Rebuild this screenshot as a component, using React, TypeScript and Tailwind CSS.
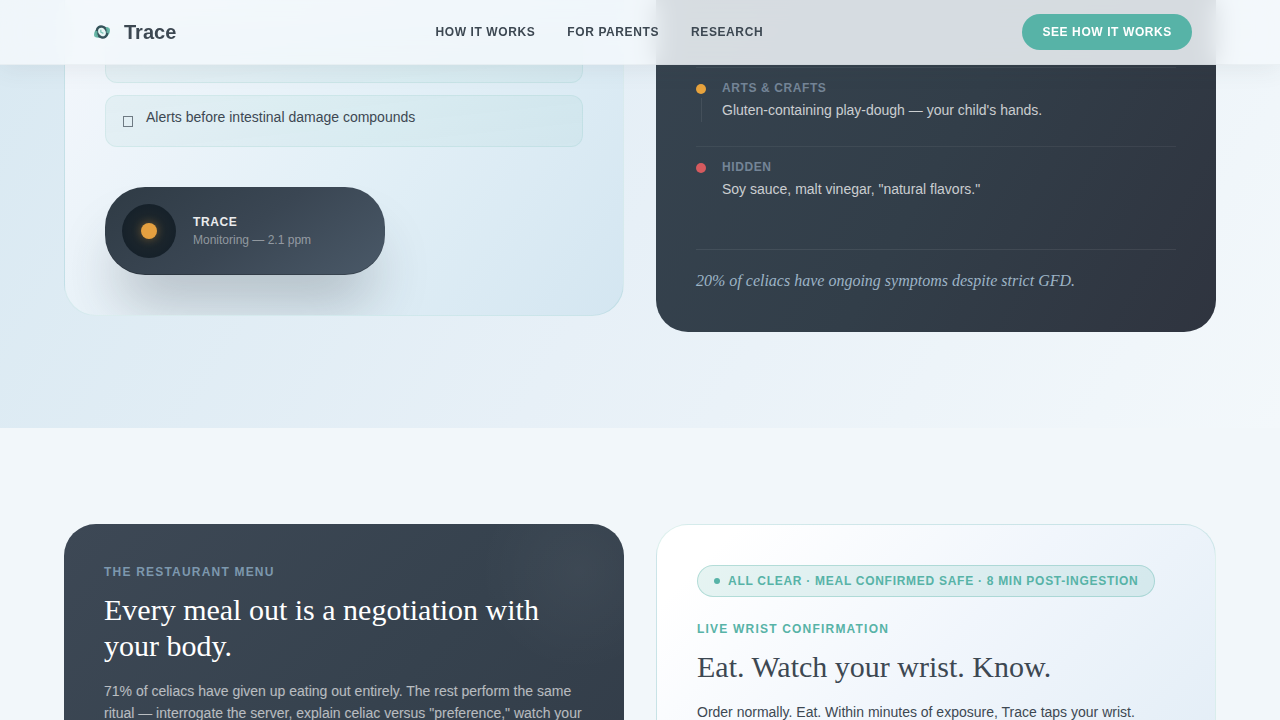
import { clsx } from "clsx";

interface Exposure {
  label: string;
  text: string;
  dot: string;
  connected: boolean;
}

const navLinks = ["How it works", "For parents", "Research"];

const exposures: Exposure[] = [
  {
    label: "Arts & crafts",
    text: "Gluten-containing play-dough — your child's hands.",
    dot: "bg-[#e8a33d]",
    connected: true,
  },
  {
    label: "Hidden",
    text: 'Soy sauce, malt vinegar, "natural flavors."',
    dot: "bg-[#d65a5e]",
    connected: false,
  },
];

function Logo() {
  return (
    <svg viewBox="0 0 28 28" className="size-7" fill="none" aria-hidden="true">
      <path d="M6 17c0-4 2.5-7 6-7.500l7-.2c2 .2 3 1.200 3 2.700 0 4-2.500 7-6 7.500l-6 .2c-2.500 0-4-1-4-2.700z" fill="#6dbbab" />
      <ellipse cx="14" cy="14" rx="4.800" ry="5.800" fill="#e6f5f4" stroke="#35535a" strokeWidth="2.400" transform="rotate(-35 14 14)" />
      <path d="M18.500 9.500a6.500 6.500 0 0 1 .8 5.500M9.500 18.500a6.500 6.500 0 0 1-.8-5.500" stroke="#5fae9f" strokeWidth="1.800" />
      <path d="M12.800 11.800v2.400l2.600 1.200" stroke="#7cc4b6" strokeWidth="1.300" />
    </svg>
  );
}

function Header() {
  return (
    <header className="fixed inset-x-0 top-0 z-50 border-b border-[#3d4852]/5 bg-[#f3f8fc]/85 shadow-[0_4px_24px_rgba(61,72,82,0.08)] will-change-transform [backdrop-filter:blur(12px)]">
      <div className="mx-16 flex h-16 items-center justify-between px-6">
        <a href="#" className="flex items-center gap-2">
          <Logo />
          <span className="text-xl font-bold text-[#3d4852]">Trace</span>
        </a>
        <nav className="flex gap-8">
          {navLinks.map((link) => (
            <a key={link} href="#" className="text-xs font-bold tracking-wider text-[#3d4852] uppercase">
              {link}
            </a>
          ))}
        </nav>
        <button className="h-9 rounded-full bg-[#57b3a7] px-5 text-xs font-bold tracking-wider text-white uppercase">
          See how it works
        </button>
      </div>
    </header>
  );
}

function Feature({ children }: { children?: string }) {
  return (
    <li className="flex h-[52px] items-start gap-3 rounded-xl border border-[#57b3a7]/12 bg-linear-to-br from-[#57b3a7]/8 to-[#57b3a7]/6 px-4 py-3">
      {children && (
        <>
          <span className="flex h-[26px] w-3 items-center justify-center">
            <span className="h-[11px] w-2.5 border border-[#3d4852]/70" />
          </span>
          <span className="-mt-px text-sm leading-5 text-[#3d4852]">{children}</span>
        </>
      )}
    </li>
  );
}

function DevicePill() {
  return (
    <div className="mt-10 flex h-[88px] w-[280px] items-center gap-4 rounded-[40px] bg-linear-[145deg] from-[#2f3b45] via-[#3a4653] to-[#4a5968] px-4 shadow-[0_40px_56px_-12px_rgba(45,55,65,0.28),inset_0_-1px_0_rgba(0,0,0,0.2)]">
      <div className="flex size-14 items-center justify-center rounded-full border border-transparent bg-[radial-gradient(circle,#222a2e_0%,#16212a_70%)] bg-clip-padding">
        <span className="size-4 rounded-full bg-[#e5a040] shadow-[0_0_10px_rgba(232,163,61,0.4)]" />
      </div>
      <div>
        <p className="text-xs leading-[18px] font-bold tracking-wider text-white/90 uppercase">Trace</p>
        <p className="text-xs leading-[18px] text-white/45">Monitoring — 2.1 ppm</p>
      </div>
    </div>
  );
}

function ExposureRow({ item, last }: { item: Exposure; last: boolean }) {
  return (
    <li className={clsx("flex gap-4 pt-3 pb-6", !last && "border-b border-white/6")}>
      <div className="flex w-2.5 flex-col items-center gap-1 pt-1">
        <span className={clsx("size-2.5 rounded-full", item.dot)} />
        <span className={clsx("h-6 w-px", item.connected && "bg-white/8")} />
      </div>
      <div>
        <h3 className="text-xs leading-4 font-bold tracking-wider text-[#748597] uppercase">{item.label}</h3>
        <p className="mt-1 text-sm leading-5 text-white/75">{item.text}</p>
      </div>
    </li>
  );
}

export default function App() {
  return (
    <div className="h-screen overflow-hidden bg-[#f2f7fa] font-['Liberation_Sans',Arial,sans-serif]">
      <Header />
      <main>
        <section className="bg-linear-[120deg] from-[#d9e9f2] via-[#e7f0f7] to-[#f3f8fb] px-16 pb-24">
          <div className="grid grid-cols-2 items-start gap-8">
            <div className="overflow-hidden rounded-b-[32px] border border-t-0 border-[#57b3a7]/15 bg-linear-[125deg] from-[#f4f7fc] via-[#e3f0f7] to-[#d4e6f1] px-10 pt-[31px] pb-10">
              <ul className="flex flex-col gap-3">
                <Feature />
                <Feature>Alerts before intestinal damage compounds</Feature>
              </ul>
              <DevicePill />
            </div>

            <div className="rounded-b-[32px] bg-linear-[120deg] from-[#36434f] via-[#323e49] to-[#2f343f] px-10 pb-10">
              <ul className="pt-[67px]">
                <li className="border-t border-white/6" />
                {exposures.map((item, i) => (
                  <ExposureRow key={item.label} item={item} last={i === exposures.length - 1} />
                ))}
              </ul>
              <p className="mt-6 border-t border-white/8 pt-5 font-['Liberation_Serif',serif] text-base leading-[22px] text-[#9db4c6] italic">
                20% of celiacs have ongoing symptoms despite strict GFD.
              </p>
            </div>
          </div>
        </section>

        <section className="px-16 pt-24">
          <div className="grid grid-cols-2 gap-8">
            <article className="rounded-t-[32px] bg-[radial-gradient(circle_at_92%_18%,rgba(255,255,255,0.04),transparent_100px),linear-gradient(135deg,#3d4855,#36424e_60%,#333d49)] p-10">
              <p className="text-xs leading-4 font-bold tracking-widest text-[#7d98ae] uppercase">The restaurant menu</p>
              <h2 className="mt-3 font-['Liberation_Serif',serif] text-3xl leading-9 text-white">
                Every meal out is a negotiation with your body.
              </h2>
              <p className="mt-4 text-sm leading-[22px] text-white/65">
                71% of celiacs have given up eating out entirely. The rest perform the same ritual — interrogate the
                server, explain celiac versus "preference," watch your plate, and hope.
              </p>
            </article>

            <article className="rounded-t-[32px] border border-b-0 border-[#57b3a7]/20 bg-linear-[135deg] from-white from-10% via-[#f1f6fc] to-[#e2edf6] p-10">
              <p className="flex h-8 w-fit items-center gap-2 rounded-full border border-[#57b3a7]/35 bg-[#57b3a7]/15 px-4 text-xs font-bold tracking-[0.06em] whitespace-nowrap text-[#57b3a7] uppercase">
                <span className="size-1.5 rounded-full bg-[#57b3a7]" />
                All clear · Meal confirmed safe · 8 min post-ingestion
              </p>
              <p className="mt-6 text-xs leading-4 font-bold tracking-widest text-[#57b3a7] uppercase">
                Live wrist confirmation
              </p>
              <h2 className="mt-3 font-['Liberation_Serif',serif] text-3xl leading-9 text-[#3d4852]">
                Eat. Watch your wrist. Know.
              </h2>
              <p className="mt-4 text-sm leading-[22px] text-[#3d4852]">
                Order normally. Eat. Within minutes of exposure, Trace taps your wrist.
              </p>
            </article>
          </div>
        </section>
      </main>
    </div>
  );
}
